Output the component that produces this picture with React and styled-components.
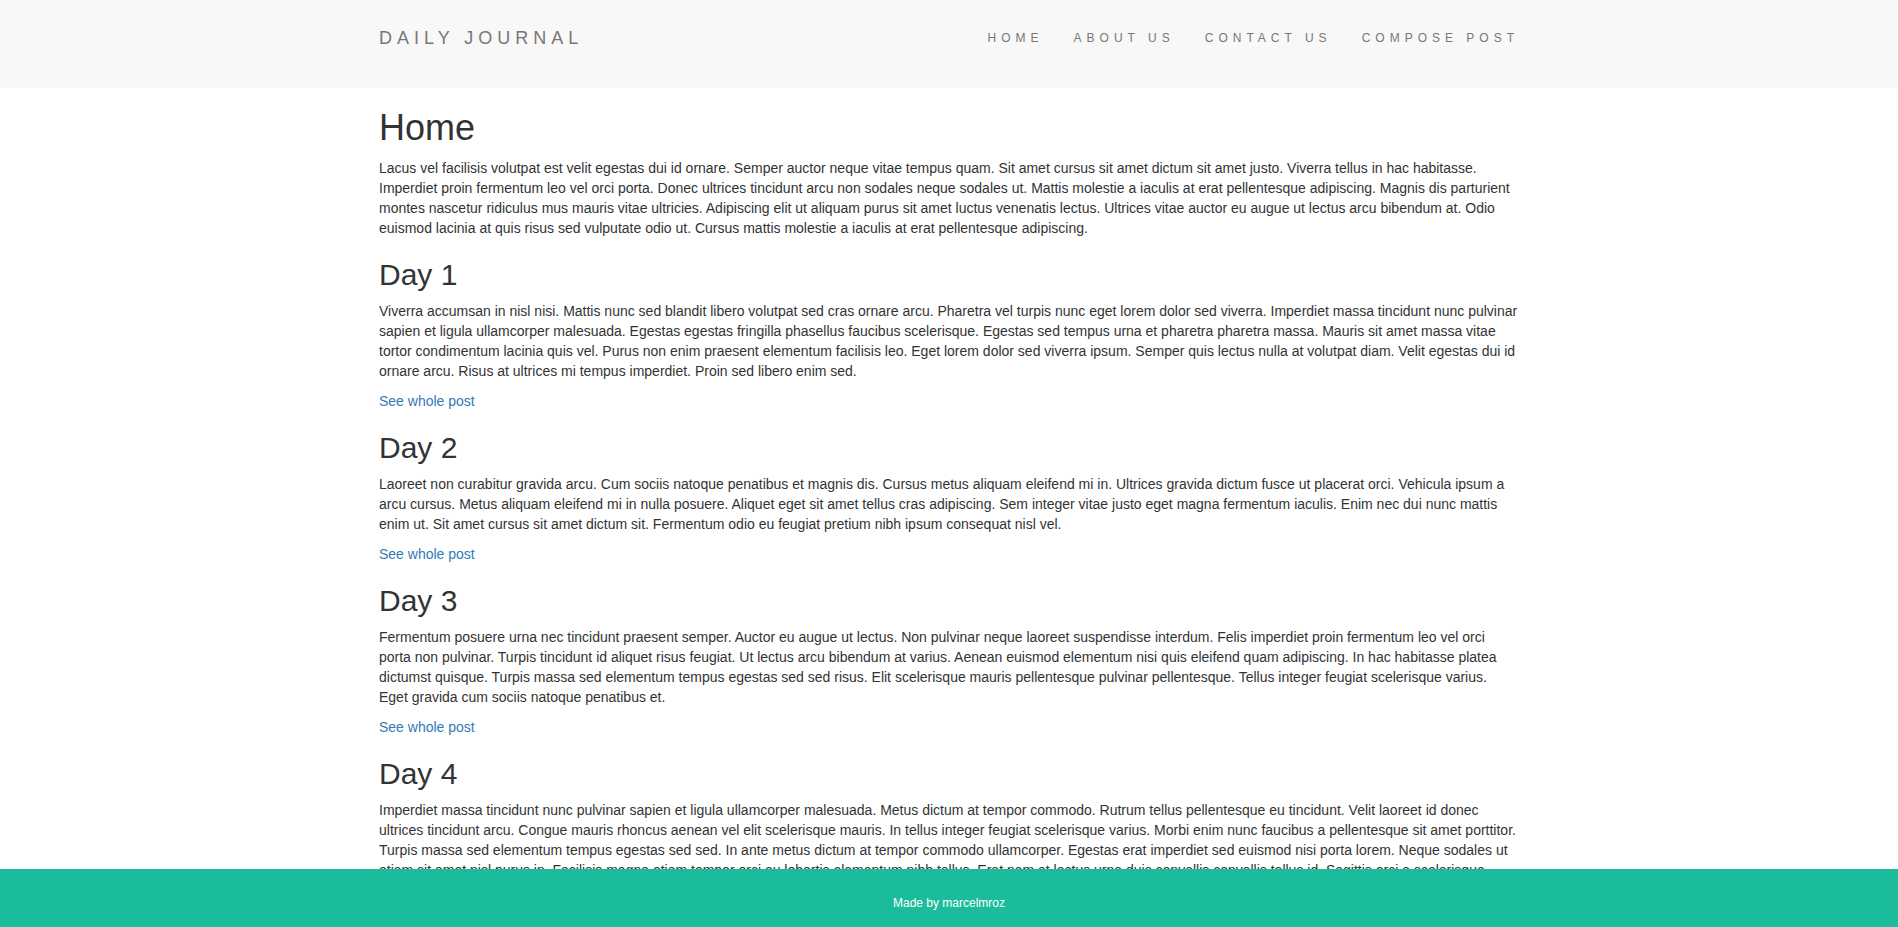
import React from 'react'
import styled, { createGlobalStyle } from 'styled-components'

const GlobalStyle = createGlobalStyle`
  html, body {
    margin: 0;
    padding: 0;
  }
  body {
    font-family: "Liberation Sans", Arial, Helvetica, sans-serif;
    font-size: 14px;
    line-height: 1.42857143;
    color: #333;
    background: #fff;
  }
  * {
    box-sizing: border-box;
  }
`

const NAV_LINKS = ['Home', 'About Us', 'Contact Us', 'Compose Post']

const POSTS = [
  {
    title: 'Day 1',
    body: 'Viverra accumsan in nisl nisi. Mattis nunc sed blandit libero volutpat sed cras ornare arcu. Pharetra vel turpis nunc eget lorem dolor sed viverra. Imperdiet massa tincidunt nunc pulvinar sapien et ligula ullamcorper malesuada. Egestas egestas fringilla phasellus faucibus scelerisque. Egestas sed tempus urna et pharetra pharetra massa. Mauris sit amet massa vitae tortor condimentum lacinia quis vel. Purus non enim praesent elementum facilisis leo. Eget lorem dolor sed viverra ipsum. Semper quis lectus nulla at volutpat diam. Velit egestas dui id ornare arcu. Risus at ultrices mi tempus imperdiet. Proin sed libero enim sed.',
  },
  {
    title: 'Day 2',
    body: 'Laoreet non curabitur gravida arcu. Cum sociis natoque penatibus et magnis dis. Cursus metus aliquam eleifend mi in. Ultrices gravida dictum fusce ut placerat orci. Vehicula ipsum a arcu cursus. Metus aliquam eleifend mi in nulla posuere. Aliquet eget sit amet tellus cras adipiscing. Sem integer vitae justo eget magna fermentum iaculis. Enim nec dui nunc mattis enim ut. Sit amet cursus sit amet dictum sit. Fermentum odio eu feugiat pretium nibh ipsum consequat nisl vel.',
  },
  {
    title: 'Day 3',
    body: 'Fermentum posuere urna nec tincidunt praesent semper. Auctor eu augue ut lectus. Non pulvinar neque laoreet suspendisse interdum. Felis imperdiet proin fermentum leo vel orci porta non pulvinar. Turpis tincidunt id aliquet risus feugiat. Ut lectus arcu bibendum at varius. Aenean euismod elementum nisi quis eleifend quam adipiscing. In hac habitasse platea dictumst quisque. Turpis massa sed elementum tempus egestas sed sed risus. Elit scelerisque mauris pellentesque pulvinar pellentesque. Tellus integer feugiat scelerisque varius. Eget gravida cum sociis natoque penatibus et.',
  },
  {
    title: 'Day 4',
    body: 'Imperdiet massa tincidunt nunc pulvinar sapien et ligula ullamcorper malesuada. Metus dictum at tempor commodo. Rutrum tellus pellentesque eu tincidunt. Velit laoreet id donec ultrices tincidunt arcu. Congue mauris rhoncus aenean vel elit scelerisque mauris. In tellus integer feugiat scelerisque varius. Morbi enim nunc faucibus a pellentesque sit amet porttitor. Turpis massa sed elementum tempus egestas sed sed. In ante metus dictum at tempor commodo ullamcorper. Egestas erat imperdiet sed euismod nisi porta lorem. Neque sodales ut etiam sit amet nisl purus in. Facilisis magna etiam tempor orci eu lobortis elementum nibh tellus. Erat nam at lectus urna duis convallis convallis tellus id. Sagittis orci a scelerisque purus semper eget duis at tellus.',
  },
]

const Navbar = styled.nav`
  height: 88px;
  background-color: #f8f8f8;
  margin-bottom: 20px;
`

const NavInner = styled.div`
  width: 1170px;
  margin: 0 auto;
  padding: 13px 15px 0;
  display: flex;
  justify-content: space-between;
  align-items: flex-start;
`

const Brand = styled.a`
  display: block;
  padding: 15px 0;
  font-size: 18px;
  line-height: 20px;
  letter-spacing: 5px;
  text-transform: uppercase;
  color: #777;
  text-decoration: none;
`

const NavList = styled.ul`
  display: flex;
  list-style: none;
  margin: 0 -15px 0 0;
  padding: 0;
`

const NavLink = styled.a`
  display: block;
  padding: 15px;
  font-size: 12px;
  line-height: 20px;
  letter-spacing: 5px;
  text-transform: uppercase;
  color: #777;
  text-decoration: none;
`

const Container = styled.main`
  width: 1170px;
  margin: 0 auto;
  padding: 0 15px 80px;
`

const PageTitle = styled.h1`
  font-size: 36px;
  font-weight: 400;
  line-height: 1.1;
  margin: 20px 0 10px;
`

const PostTitle = styled.h2`
  font-size: 30px;
  font-weight: 400;
  line-height: 1.1;
  margin: 20px 0 10px;
`

const Paragraph = styled.p`
  margin: 0 0 10px;
`

const ReadMore = styled.a`
  color: #337ab7;
  text-decoration: none;
`

const Footer = styled.footer`
  position: fixed;
  left: 0;
  right: 0;
  bottom: 0;
  height: 58px;
  padding-top: 25px;
  background-color: #1abc9c;
  color: #fff;
  font-size: 12px;
  line-height: 18px;
  text-align: center;
`

export default function App() {
  return (
    <>
      <GlobalStyle />
      <Navbar>
        <NavInner>
          <Brand href="#">Daily Journal</Brand>
          <NavList>
            {NAV_LINKS.map(link => (
              <li key={link}>
                <NavLink href="#">{link}</NavLink>
              </li>
            ))}
          </NavList>
        </NavInner>
      </Navbar>
      <Container>
        <PageTitle>Home</PageTitle>
        <Paragraph>
          Lacus vel facilisis volutpat est velit egestas dui id ornare. Semper auctor neque vitae tempus quam. Sit amet cursus sit amet dictum sit amet justo. Viverra tellus in hac habitasse. Imperdiet proin fermentum leo vel orci porta. Donec ultrices tincidunt arcu non sodales neque sodales ut. Mattis molestie a iaculis at erat pellentesque adipiscing. Magnis dis parturient montes nascetur ridiculus mus mauris vitae ultricies. Adipiscing elit ut aliquam purus sit amet luctus venenatis lectus. Ultrices vitae auctor eu augue ut lectus arcu bibendum at. Odio euismod lacinia at quis risus sed vulputate odio ut. Cursus mattis molestie a iaculis at erat pellentesque adipiscing.
        </Paragraph>
        {POSTS.map(post => (
          <article key={post.title}>
            <PostTitle>{post.title}</PostTitle>
            <Paragraph>{post.body}</Paragraph>
            <Paragraph>
              <ReadMore href="#">See whole post</ReadMore>
            </Paragraph>
          </article>
        ))}
      </Container>
      <Footer>Made by marcelmroz</Footer>
    </>
  )
}
